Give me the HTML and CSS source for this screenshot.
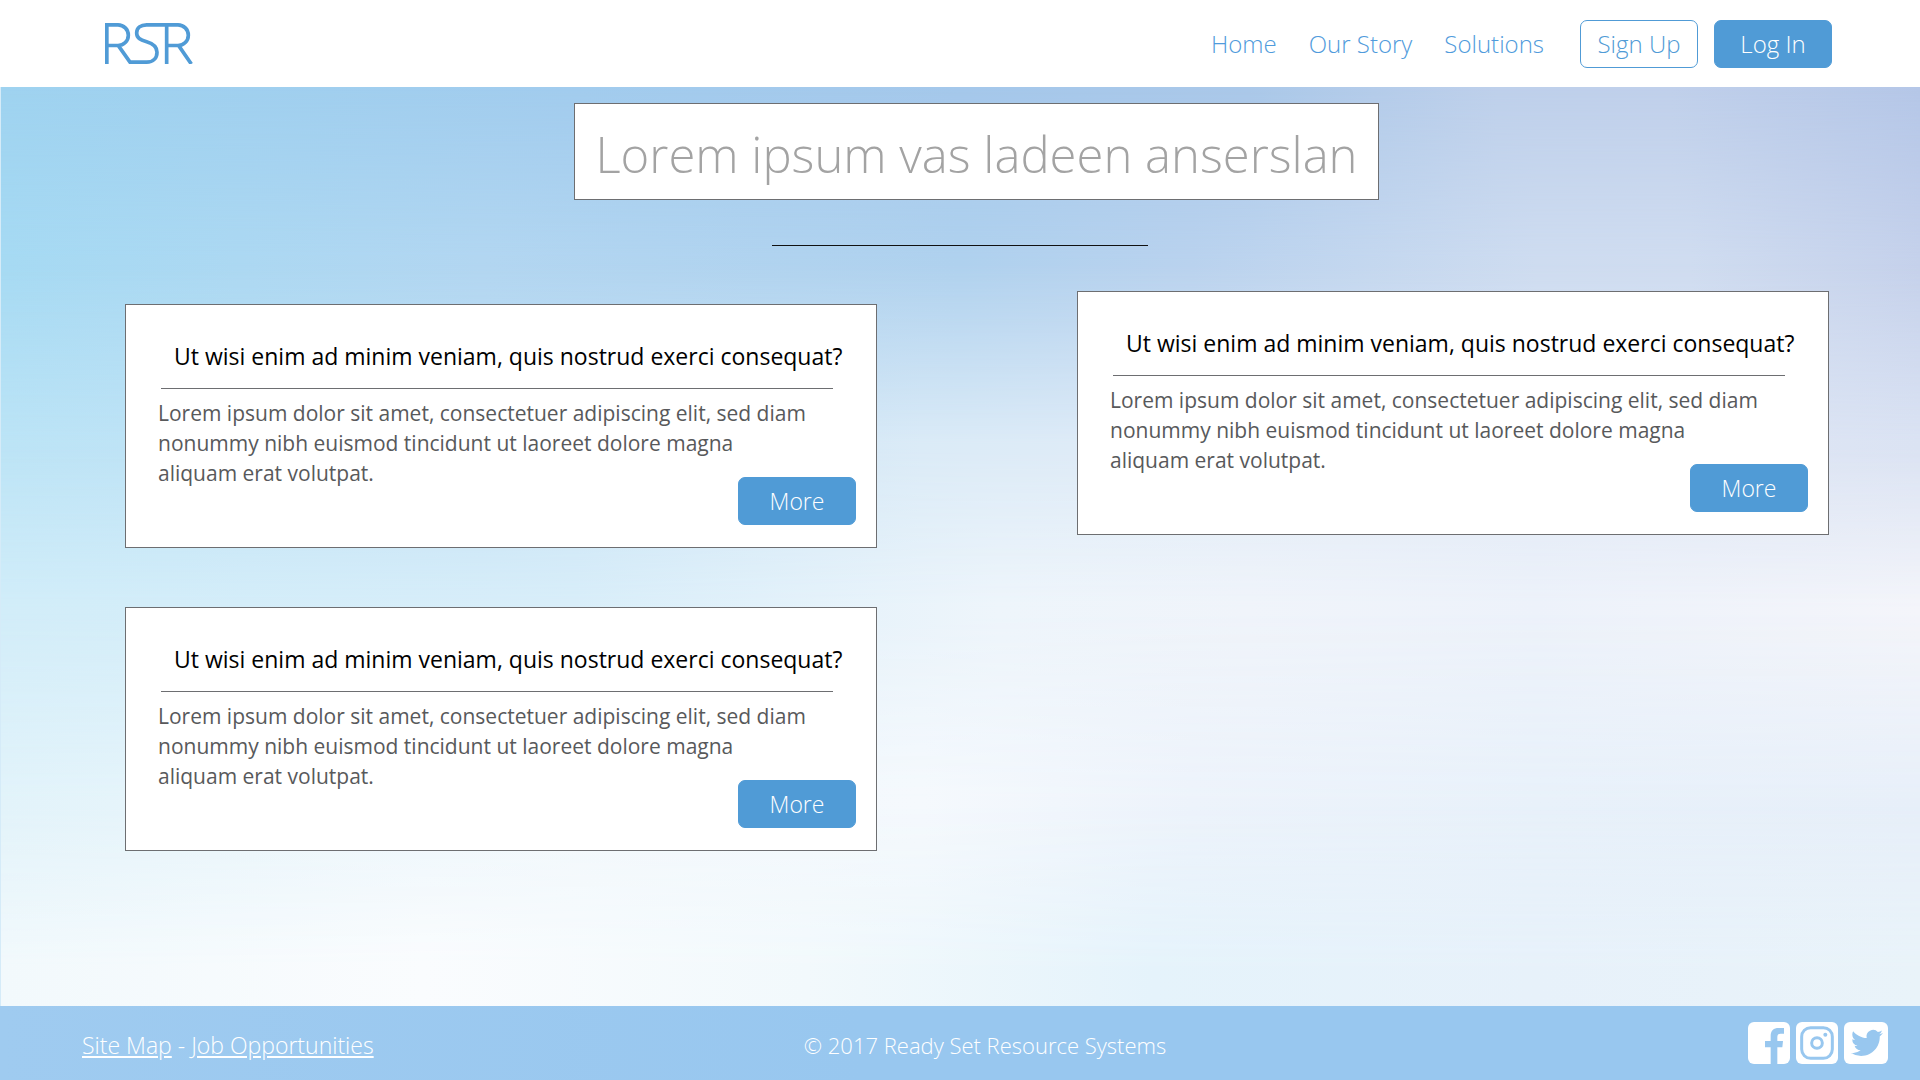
FILE: index.html
```html
<!DOCTYPE html>
<html lang="en">
<head>
<meta charset="utf-8">
<meta name="viewport" content="width=device-width, initial-scale=1">
<title>Ready Set Resource Systems</title>
<link rel="stylesheet" href="styles.css">
</head>
<body>
<div class="page">
  <header class="header">
    <a class="logo" href="#" aria-label="RSR">
      <svg viewBox="315 68 264 123" fill="none" stroke="#509bd6" stroke-width="11" aria-hidden="true">
        <path d="M320.500 191V73.500H354a31 31 0 0 1 0 62H326M355 136L390 185.500H440c20 0 31-13 31-30c0-18-12-26-31-31.500c-20-6-30-11-30-26c0-15 12-24.500 30-24.500H534a31 31 0 0 1 0 62H505M500 73.500V191M536 136L574 191"/>
      </svg>
    </a>
    <nav class="nav">
      <a class="nav-link" href="#">Home</a>
      <a class="nav-link" href="#">Our Story</a>
      <a class="nav-link" href="#">Solutions</a>
    </nav>
    <div class="actions">
      <button class="button button-outline" type="button">Sign Up</button>
      <button class="button" type="button">Log In</button>
    </div>
  </header>

  <main class="main">
    <div class="sky" aria-hidden="true">
      <div class="band band-1"></div>
      <div class="band band-2"></div>
      <div class="band band-3"></div>
      <div class="band band-4"></div>
      <div class="band band-5"></div>
      <div class="band band-6"></div>
    </div>
    <div class="intro">
      <h1 class="title">Lorem ipsum vas ladeen anserslan</h1>
    </div>
    <hr class="divider">
    <div class="columns">
      <div class="column column-low">
        <article class="card">
          <h2 class="card-title">Ut wisi enim ad minim veniam, quis nostrud exerci consequat?</h2>
          <div class="card-body">
            <p class="card-text">Lorem ipsum dolor sit amet, consectetuer adipiscing elit, sed diam nonummy nibh euismod tincidunt ut laoreet dolore magna<br>aliquam erat volutpat.</p>
            <button class="button card-more" type="button">More</button>
          </div>
        </article>
        <article class="card">
          <h2 class="card-title">Ut wisi enim ad minim veniam, quis nostrud exerci consequat?</h2>
          <div class="card-body">
            <p class="card-text">Lorem ipsum dolor sit amet, consectetuer adipiscing elit, sed diam nonummy nibh euismod tincidunt ut laoreet dolore magna<br>aliquam erat volutpat.</p>
            <button class="button card-more" type="button">More</button>
          </div>
        </article>
      </div>
      <div class="column">
        <article class="card">
          <h2 class="card-title">Ut wisi enim ad minim veniam, quis nostrud exerci consequat?</h2>
          <div class="card-body">
            <p class="card-text">Lorem ipsum dolor sit amet, consectetuer adipiscing elit, sed diam nonummy nibh euismod tincidunt ut laoreet dolore magna<br>aliquam erat volutpat.</p>
            <button class="button card-more" type="button">More</button>
          </div>
        </article>
      </div>
    </div>
  </main>

  <footer class="footer">
    <div class="footer-links"><a href="#">Site Map</a> - <a href="#">Job Opportunities</a></div>
    <div class="copyright">© 2017 Ready Set Resource Systems</div>
    <div class="social">
      <a href="#" aria-label="Facebook">
        <svg class="social-icon" viewBox="0 0 126 126" aria-hidden="true">
          <rect width="126" height="126" rx="18" fill="#fff"/>
          <path fill="#98c7ef" d="M68 126V76H51V57H68V42C68 26 77 18 92 18H108V35H98C91 35 88 38 88 45V57H105L103 76H88V126Z"/>
        </svg>
      </a>
      <a href="#" aria-label="Instagram">
        <svg class="social-icon" viewBox="0 0 126 126" aria-hidden="true">
          <rect width="126" height="126" rx="18" fill="#fff"/>
          <g fill="none" stroke="#98c7ef" stroke-width="9">
            <rect x="17" y="17" width="92" height="92" rx="27"/>
            <circle cx="63" cy="63" r="16"/>
          </g>
          <circle cx="88" cy="38" r="6" fill="#98c7ef"/>
        </svg>
      </a>
      <a href="#" aria-label="Twitter">
        <svg class="social-icon social-icon-wide" viewBox="0 0 132 126" aria-hidden="true">
          <rect width="132" height="126" rx="18" fill="#fff"/>
          <path transform="translate(21 15) scale(4)" fill="#98c7ef" d="M23.953 4.570a10 10 0 0 1-2.825.775 4.958 4.958 0 0 0 2.163-2.723c-.951.555-2.005.959-3.127 1.184a4.920 4.920 0 0 0-8.384 4.482C7.690 8.095 4.067 6.130 1.640 3.162a4.822 4.822 0 0 0-.666 2.475c0 1.710.870 3.213 2.188 4.096a4.904 4.904 0 0 1-2.228-.616v.060a4.923 4.923 0 0 0 3.946 4.827 4.996 4.996 0 0 1-2.212.085 4.936 4.936 0 0 0 4.604 3.417 9.867 9.867 0 0 1-6.102 2.105c-.390 0-.779-.023-1.170-.067a13.995 13.995 0 0 0 7.557 2.209c9.053 0 13.998-7.496 13.998-13.985 0-.210 0-.420-.015-.630A9.935 9.935 0 0 0 24 4.590z"/>
        </svg>
      </a>
    </div>
  </footer>
</div>
</body>
</html>
```

FILE: styles.css
```css
* {
  box-sizing: border-box;
}

body {
  margin: 0;
  font-family: "Open Sans", "Noto Sans", sans-serif;
  font-size: 23px;
  font-weight: 300;
}

.page {
  display: flex;
  flex-direction: column;
  min-height: 100vh;
}

/* Header */

.header {
  display: flex;
  align-items: center;
  min-height: 87px;
  padding: 0 88px 0 105px;
  background: #fff;
  font-size: 24px;
}

.logo svg {
  display: block;
  width: 88px;
  height: 41px;
}

.nav {
  display: flex;
  gap: 32px;
  margin-left: auto;
}

.nav-link {
  color: #509bdc;
  text-decoration: none;
}

.actions {
  display: flex;
  gap: 16px;
  margin-left: 36px;
}

.button {
  width: 118px;
  height: 48px;
  padding: 0;
  border: 1px solid #509bd6;
  border-radius: 7px;
  background: #509bd6;
  color: #fff;
  font: inherit;
}

.button-outline {
  background: #fff;
  color: #509bd6;
}

/* Main */

.main {
  position: relative;
  flex: 1;
  padding: 16px 0 60px;
}

.sky {
  position: absolute;
  inset: 0;
  z-index: -1;
  overflow: hidden;
  border-left: 1px solid #d5ebf8;
}

/* Each band fades in over the one above it, which blends the rows of colour. */
.band {
  position: absolute;
  inset: 0;
}

.band-1 {
  background: linear-gradient(90deg, #9fd3f0, #a2ccee 30%, #a5c8eb 50%, #aac8e9 65%, #bed0eb 78%, #c0d0eb 87%, #b5c7e8);
}

.band-2 {
  background: linear-gradient(90deg, #a6daf3, #b2d6f1 25%, #afd1ee 50%, #b9d2ee 62%, #cedcf0 80%, #cfdcf0 88%, #c5d1eb);
  mask-image: linear-gradient(transparent, #000 19%);
}

.band-3 {
  background: linear-gradient(90deg, #bce4f6, #c4e1f5 25%, #dbebf7 48%, #deebf7 56%, #e0eaf6 70%, #dfe7f5 85%, #dbe3f3);
  mask-image: linear-gradient(transparent 19%, #000 39%);
}

.band-4 {
  background: linear-gradient(90deg, #d2edf9, #d9eef9 30%, #eef5fb 52%, #f0f4fa 65%, #edf2fa 80%, #f4f5fa);
  mask-image: linear-gradient(transparent 39%, #000 57%);
}

.band-5 {
  background: linear-gradient(90deg, #e2f3fa, #f2f8fc 30%, #f5f9fd 48%, #edf3fb 62%, #e8f1fa 80%, #e7eff9);
  mask-image: linear-gradient(transparent 57%, #000 78%);
}

.band-6 {
  background: linear-gradient(90deg, #f2f9fc, #fafcfe 22%, #f2f9fc 42%, #e5f3fb 60%, #e7f1fa 80%, #e9f3f9);
  mask-image: linear-gradient(transparent 78%, #000 96%);
}

.intro {
  display: flex;
  justify-content: center;
  padding-left: 33px;
}

.title {
  margin: 0;
  padding: 16px 20px 10px;
  border: 1px solid #6d6e71;
  background: #fff;
  color: #a3a3a3;
  font-size: 49px;
  font-weight: 300;
  line-height: 69px;
}

.divider {
  width: 376px;
  height: 1px;
  margin: 45px auto;
  border: 0;
  background: #111;
}

.columns {
  display: grid;
  grid-template-columns: repeat(2, minmax(0, 1fr));
  gap: 200px;
  padding: 0 91px 0 125px;
}

.column {
  display: flex;
  flex-direction: column;
  gap: 59px;
}

.column-low {
  padding-top: 13px;
}

.card {
  padding: 33px 20px 22px 32px;
  border: 1px solid #6d6e71;
  background: #fff;
}

.card-title {
  margin: 0 23px 9px 3px;
  padding: 0 0 14px 13px;
  border-bottom: 1px solid #6d6e71;
  color: #000;
  font-size: 23px;
  font-weight: 400;
  line-height: 36px;
  white-space: nowrap;
}

.card-body {
  display: grid;
  min-height: 127px;
}

.card-text {
  grid-area: 1 / 1;
  margin: 0 24px 0 0;
  color: #58595b;
  font-size: 21px;
  font-weight: 400;
  line-height: 30px;
}

.card-more {
  grid-area: 1 / 1;
  place-self: end;
}

/* Footer */

.footer {
  display: grid;
  grid-template-columns: 1fr auto 1fr;
  align-items: center;
  min-height: 74px;
  padding: 0 32px 0 82px;
  background: linear-gradient(90deg, #9fcbf0, #98c7ef 45%);
  color: #fff;
}

.footer a {
  color: inherit;
}

.footer-links,
.copyright {
  padding-top: 3px;
}

.copyright {
  font-size: 22px;
}

.social {
  display: flex;
  justify-content: flex-end;
  gap: 6px;
}

.social-icon {
  display: block;
  width: 42px;
  height: 42px;
}

.social-icon-wide {
  width: 44px;
}
```
